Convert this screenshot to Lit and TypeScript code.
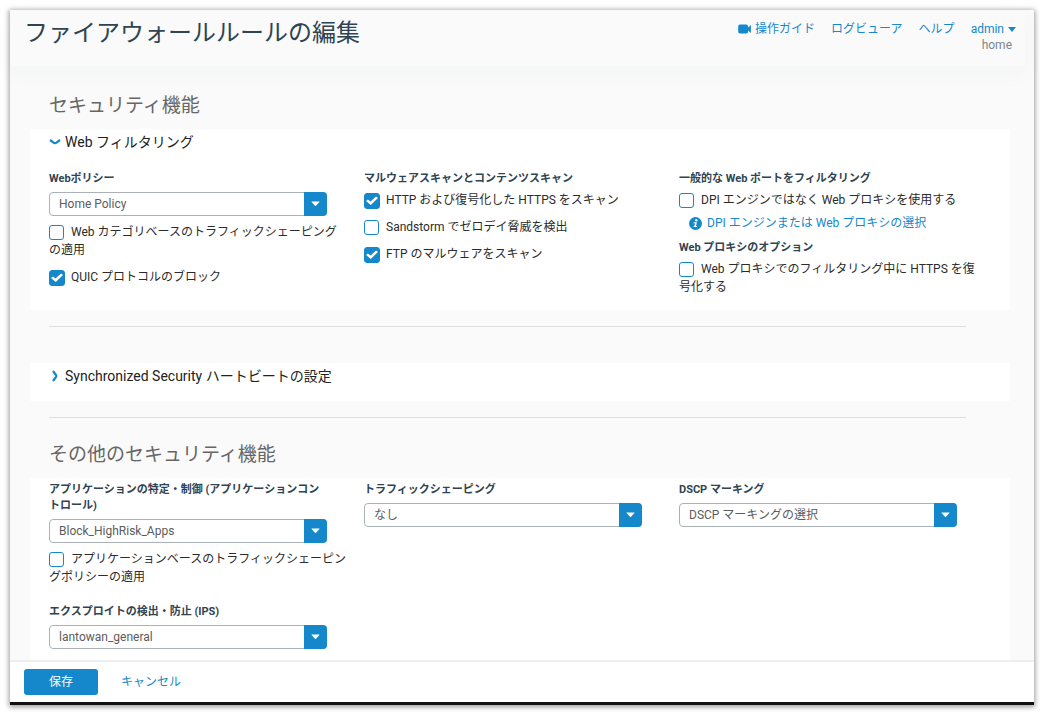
import { LitElement, html, css, svg, nothing } from "lit";
import { customElement, property, state } from "lit/decorators.js";

const baseText = css`
  :host {
    font-family: Roboto, "Noto Sans CJK JP", sans-serif;
    font-size: 12px;
    line-height: 18px;
    color: #2b2b2b;
  }
  * {
    box-sizing: border-box;
  }
`;

@customElement("select-field")
export class SelectField extends LitElement {
  @property() label = "";
  @property() value = "";

  static styles = [
    baseText,
    css`
      :host {
        display: block;
      }
      .field {
        display: flex;
        flex-direction: column;
        gap: 5px;
        max-width: 278px;
      }
      .label {
        font-size: 11px;
        line-height: 16px;
        font-weight: 700;
        color: #2f4452;
      }
      .box {
        display: grid;
        grid-template-columns: 1fr 23px;
      }
      .select {
        grid-area: 1 / 1 / 2 / 3;
        appearance: none;
        width: 100%;
        height: 24px;
        margin: 0;
        padding: 0 28px 0 9px;
        border: 1px solid #a9b2b8;
        border-radius: 4px;
        background: #fff;
        color: #5c5c5c;
        font: inherit;
      }
      .arrow {
        grid-area: 1 / 2;
        display: flex;
        align-items: center;
        justify-content: center;
        border-radius: 0 4px 4px 0;
        background: #1588cb;
        pointer-events: none;
        z-index: 1;
      }
    `,
  ];

  render() {
    return html`
      <div class="field">
        <label class="label" for="select">${this.label}</label>
        <div class="box">
          <select class="select" id="select">
            <option selected>${this.value}</option>
          </select>
          <span class="arrow">
            <svg width="9" height="6" viewBox="0 0 9 6" aria-hidden="true">
              <path d="M0.8 0.5h7.4q.6 0 .2.5L5 4.8q-.5.5-1 0L.6 1q-.4-.5.2-.5z" fill="#fff" />
            </svg>
          </span>
        </div>
      </div>
    `;
  }
}

@customElement("check-field")
export class CheckField extends LitElement {
  @property() label = "";
  @property({ type: Boolean }) checked = false;

  static styles = [
    baseText,
    css`
      :host {
        display: block;
      }
      .label {
        display: block;
      }
      .input {
        appearance: none;
        display: inline-grid;
        place-content: center;
        width: 15px;
        height: 15px;
        margin: 0 7px 0 0;
        border: 1px solid #1588cb;
        border-radius: 3px;
        background: #fff;
        vertical-align: middle;
      }
      .input:checked {
        width: 16px;
        height: 16px;
        margin-right: 6px;
        background: #1588cb;
      }
      .input:checked::before {
        content: "";
        width: 12px;
        height: 9px;
        background: #fff;
        clip-path: polygon(0 52%, 16% 34%, 38% 58%, 84% 2%, 100% 18%, 40% 96%);
      }
    `,
  ];

  render() {
    return html`<label class="label"
      ><input class="input" type="checkbox" .checked=${this.checked} />${this.label}</label
    >`;
  }
}

const cameraIcon = svg`<path d="M2 0.500h6.200a1.800 1.800 0 0 1 1.800 1.800v5.400A1.800 1.800 0 0 1 8.200 9.500H2A1.800 1.800 0 0 1 .2 7.700V2.300A1.800 1.800 0 0 1 2 .5zM12.900 1v8L9.800 6.300V3.700z" fill="currentColor"/>`;

@customElement("app-root")
export class AppRoot extends LitElement {
  @state() private webFilterOpen = true;

  static styles = [
    baseText,
    css`
      :host {
        display: block;
        height: 100vh;
        padding: 10px;
        box-sizing: border-box;
        background: #fff;
      }
      .window {
        display: flex;
        flex-direction: column;
        height: 100%;
        border-bottom: 3px solid #111;
        background: #fafafa;
        box-shadow: 0 1px 5px 1px rgba(0, 0, 0, 0.4);
      }
      .header {
        display: flex;
        justify-content: space-between;
        align-items: flex-start;
        margin-right: 9px;
        padding: 5px 9px 14px 14px;
        box-shadow: 0 8px 24px rgba(0, 70, 80, 0.03);
      }
      .title {
        margin: 0;
        font-size: 24px;
        line-height: 36px;
        font-weight: 400;
        color: #2f4452;
      }
      .nav {
        display: flex;
        gap: 16px;
        padding-top: 5px;
      }
      a {
        color: #1588cb;
        text-decoration: none;
      }
      .link {
        display: flex;
        align-items: center;
        gap: 4px;
      }
      .user {
        display: flex;
        flex-direction: column;
        align-items: flex-end;
      }
      .org {
        padding-right: 4px;
        line-height: 14px;
        color: #7b868c;
      }
      .main {
        flex: 1;
        min-height: 0;
        overflow: hidden;
        padding: 26px 24px 0 20px;
      }
      .heading {
        margin: 0 0 9px 19px;
        font-size: 19px;
        line-height: 28px;
        font-weight: 400;
        color: #666;
      }
      .panel {
        padding: 3px 34px 0 19px;
        background: #fff;
      }
      .rule {
        height: 1px;
        margin: 16px 44px 36px 19px;
        border: 0;
        background: #dedfe0;
      }
      .rule.tight {
        margin-bottom: 23px;
      }
      .toggle {
        display: flex;
        align-items: center;
        gap: 4px;
        padding: 0;
        border: 0;
        background: none;
        font: inherit;
        font-size: 14px;
        line-height: 20px;
        color: #222;
      }
      .columns {
        display: grid;
        grid-template-columns: repeat(3, minmax(0, 1fr));
        column-gap: 18px;
      }
      .filters {
        padding: 19px 0 14px;
      }
      .collapsed {
        padding-bottom: 15px;
      }
      .checks {
        display: flex;
        flex-direction: column;
        gap: 9px;
      }
      .after {
        margin-top: 7px;
      }
      .group {
        margin: 0 0 4px;
        font-size: 11px;
        line-height: 16px;
        font-weight: 700;
        color: #2f4452;
      }
      .info {
        display: flex;
        align-items: center;
        gap: 5px;
        margin: 5px 0 8px 10px;
      }
      .next {
        margin-top: 18px;
      }
      .other {
        padding-top: 4px;
        padding-bottom: 40px;
      }
      .footer {
        display: flex;
        align-items: center;
        gap: 23px;
        padding: 7px 14px;
        border-top: 2px solid #eee;
        background: #fff;
      }
      .save {
        width: 74px;
        height: 26px;
        padding: 0;
        border: 0;
        border-radius: 3px;
        background: #1588cb;
        color: #fff;
        font: inherit;
      }
    `,
  ];

  private toggleWebFilter() {
    this.webFilterOpen = !this.webFilterOpen;
  }

  private renderChevron(open: boolean) {
    return html`<svg width="12" height="12" viewBox="0 0 12 12" aria-hidden="true">
      <path
        d=${open ? "M1 4L4.500 6.600Q6 7.700 7.500 6.600L11 4" : "M4 1L7 5Q7.700 6 7 7L4 11"}
        fill="none"
        stroke="#1588cb"
        stroke-width="2.2"
      />
    </svg>`;
  }

  private renderFilters() {
    return html`
      <div class="columns filters">
        <div>
          <select-field label="Webポリシー" value="Home Policy"></select-field>
          <div class="checks after">
            <check-field label="Web カテゴリベースのトラフィックシェーピングの適用"></check-field>
            <check-field label="QUIC プロトコルのブロック" checked></check-field>
          </div>
        </div>
        <div>
          <h3 class="group">マルウェアスキャンとコンテンツスキャン</h3>
          <div class="checks">
            <check-field label="HTTP および復号化した HTTPS をスキャン" checked></check-field>
            <check-field label="Sandstorm でゼロデイ脅威を検出"></check-field>
            <check-field label="FTP のマルウェアをスキャン" checked></check-field>
          </div>
        </div>
        <div>
          <h3 class="group">一般的な Web ポートをフィルタリング</h3>
          <check-field label="DPI エンジンではなく Web プロキシを使用する"></check-field>
          <a class="info" href="#">
            <svg width="13" height="13" viewBox="0 0 13 13" aria-hidden="true">
              <circle cx="6.500" cy="6.500" r="6.500" fill="currentColor" />
              <circle cx="7.300" cy="3.200" r="1.200" fill="#fff" />
              <path d="M4.700 5.200h3.200L7 9h.9l-.2 1H4.500l.2-1h.7l.6-2.800H4.500z" fill="#fff" />
            </svg>
            DPI エンジンまたは Web プロキシの選択
          </a>
          <h3 class="group">Web プロキシのオプション</h3>
          <check-field label="Web プロキシでのフィルタリング中に HTTPS を復号化する"></check-field>
        </div>
      </div>
    `;
  }

  render() {
    return html`
      <div class="window" lang="ja">
        <header class="header">
          <h1 class="title">ファイアウォールルールの編集</h1>
          <nav class="nav">
            <div>
              <a class="link" href="#">
                <svg width="13" height="10" viewBox="0 0 13 10" aria-hidden="true">${cameraIcon}</svg>
                操作ガイド
              </a>
            </div>
            <a href="#">ログビューア</a>
            <a href="#">ヘルプ</a>
            <div class="user">
              <a class="link" href="#">
                admin
                <svg width="8" height="5" viewBox="0 0 8 5" aria-hidden="true">
                  <path d="M0 0h8L4 5z" fill="currentColor" />
                </svg>
              </a>
              <span class="org">home</span>
            </div>
          </nav>
        </header>

        <main class="main">
          <h2 class="heading">セキュリティ機能</h2>
          <section class="panel">
            <button
              class="toggle"
              aria-expanded=${this.webFilterOpen ? "true" : "false"}
              @click=${this.toggleWebFilter}
            >
              ${this.renderChevron(this.webFilterOpen)} Web フィルタリング
            </button>
            ${this.webFilterOpen ? this.renderFilters() : nothing}
          </section>
          <hr class="rule" />
          <section class="panel collapsed">
            <button class="toggle" aria-expanded="false">
              ${this.renderChevron(false)} Synchronized Security ハートビートの設定
            </button>
          </section>
          <hr class="rule tight" />
          <h2 class="heading">その他のセキュリティ機能</h2>
          <section class="panel columns other">
            <div>
              <select-field
                label="アプリケーションの特定・制御 (アプリケーションコントロール)"
                value="Block_HighRisk_Apps"
              ></select-field>
              <check-field
                class="after"
                label="アプリケーションベースのトラフィックシェーピングポリシーの適用"
              ></check-field>
              <select-field
                class="next"
                label="エクスプロイトの検出・防止 (IPS)"
                value="lantowan_general"
              ></select-field>
            </div>
            <select-field label="トラフィックシェーピング" value="なし"></select-field>
            <select-field label="DSCP マーキング" value="DSCP マーキングの選択"></select-field>
          </section>
        </main>

        <footer class="footer">
          <button class="save">保存</button>
          <a href="#">キャンセル</a>
        </footer>
      </div>
    `;
  }
}
